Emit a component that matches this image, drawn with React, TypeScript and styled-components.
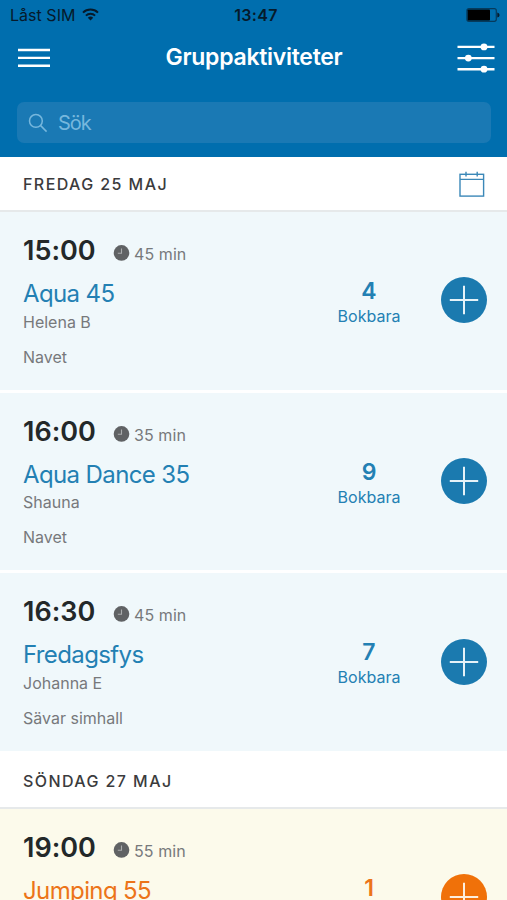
import React from 'react';
import styled, { createGlobalStyle } from 'styled-components';

const GlobalStyle = createGlobalStyle`
  * { box-sizing: border-box; }
  body {
    margin: 0;
    background: #fff;
    font-family: Inter, "Liberation Sans", sans-serif;
    font-feature-settings: "calt" 0;
  }
  h1, h2, h3, p { margin: 0; }
  button { border: 0; padding: 0; background: none; display: flex; }
  svg { display: block; }
`;

const Screen = styled.div`
  width: 507px;
  height: 900px;
  overflow: hidden;
  background: #fff;
`;

const Header = styled.header`
  height: 157px;
  background: #006eae;
`;

const StatusBar = styled.div`
  height: 30px;
  display: grid;
  grid-template-columns: 1fr auto 1fr;
  align-items: center;
  padding: 0 7px 1px 10px;
  color: #061a2b;
`;

const Carrier = styled.div`
  display: flex;
  align-items: center;
  gap: 7px;
  font-size: 16px;
  line-height: 20px;
  letter-spacing: 0.03px;
`;

const Clock = styled.div`
  font-size: 16px;
  line-height: 20px;
  font-weight: 600;
  letter-spacing: 0.35px;
  padding-left: 2px;
`;

const BatterySlot = styled.div`
  display: flex;
  justify-content: flex-end;
`;

const NavBar = styled.div`
  height: 54px;
  display: grid;
  grid-template-columns: 1fr auto 1fr;
  align-items: center;
  padding: 1px 12px 0 18px;
`;

const NavTitle = styled.h1`
  color: #fff;
  font-size: 23px;
  line-height: 28px;
  font-weight: 600;
  letter-spacing: -0.28px;
  padding: 0 5px 1px 0;
`;

const FilterButton = styled.button`
  justify-self: end;
`;

const SearchField = styled.div`
  margin: 18px 16px 0 17px;
  height: 41px;
  border-radius: 7px;
  background: #1a79b4;
  color: #76b7dd;
  display: flex;
  align-items: center;
  gap: 10px;
  padding-left: 11px;
  font-size: 20px;
  line-height: 24px;
  letter-spacing: -1px;
`;

const DayHeader = styled.div<{ $height: number; $top?: number }>`
  height: ${p => p.$height}px;
  display: flex;
  align-items: center;
  justify-content: space-between;
  padding: ${p => p.$top ?? 0}px 22px 0 23px;
  border-bottom: 2px solid #e6e9ea;
`;

const DayTitle = styled.h2`
  color: #3b3b3d;
  font-size: 16px;
  line-height: 20px;
  font-weight: 500;
  letter-spacing: 1.42px;
`;

const Card = styled.article<{ $tone: Tone }>`
  height: 177.5px;
  display: grid;
  grid-template-columns: 1fr 92px 92px;
  padding: 23px 0 0 23px;
  background: ${p => (p.$tone === 'blue' ? '#f0f8fb' : '#fcfaeb')};
  color: ${p => (p.$tone === 'blue' ? '#2380b3' : '#ec7419')};
  & + & { margin-top: 3.2px; }
`;

const TimeLine = styled.div`
  display: flex;
  height: 32px;
`;

const StartTime = styled.div`
  width: 90px;
  color: #232829;
  font-size: 27px;
  line-height: 32px;
  font-weight: 560;
`;

const Duration = styled.div`
  display: flex;
  gap: 4px;
  padding-top: 9px;
  color: #77797b;
  font-size: 16px;
  line-height: 20px;
  letter-spacing: 0.08px;
`;

const Name = styled.h3`
  margin-top: 12px;
  font-size: 24px;
  line-height: 30px;
  font-weight: 400;
  letter-spacing: -0.62px;
`;

const Detail = styled.p<{ $gap: number }>`
  margin-top: ${p => p.$gap}px;
  color: #77797b;
  font-size: 16px;
  line-height: 20px;
`;

const Availability = styled.div`
  padding-top: 42px;
  text-align: center;
`;

const Count = styled.div`
  font-size: 23px;
  line-height: 28px;
  font-weight: 600;
`;

const CountLabel = styled.div`
  margin-top: 1px;
  font-size: 16px;
  line-height: 20px;
`;

const AddButton = styled.button<{ $tone: Tone }>`
  width: 46px;
  height: 46px;
  margin: 42.3px 0 0 25.8px;
  border-radius: 50%;
  align-items: center;
  justify-content: center;
  background: ${p => (p.$tone === 'blue' ? '#1b7aaf' : '#f07109')};
`;

type Tone = 'blue' | 'orange';

interface Activity {
  time: string;
  minutes: number;
  name: string;
  leader: string;
  place: string;
  spots: number;
}

const friday: Activity[] = [
  { time: '15:00', minutes: 45, name: 'Aqua 45', leader: 'Helena B', place: 'Navet', spots: 4 },
  { time: '16:00', minutes: 35, name: 'Aqua Dance 35', leader: 'Shauna', place: 'Navet', spots: 9 },
  { time: '16:30', minutes: 45, name: 'Fredagsfys', leader: 'Johanna E', place: 'Sävar simhall', spots: 7 },
];

const sunday: Activity[] = [
  { time: '19:00', minutes: 55, name: 'Jumping 55', leader: '', place: '', spots: 1 },
];

const WifiIcon = () => (
  <svg width="17" height="13" viewBox="0 0 17 13" fill="none" stroke="#061a2b" strokeWidth="2">
    <path d="M1 4.6C5.2.6 11.8.6 16 4.6" />
    <path d="M3.9 7.6C6.5 5.1 10.5 5.1 13.1 7.6" />
    <path d="M8.5 12.6L5.8 9.7Q8.5 7.3 11.2 9.7Z" fill="#061a2b" stroke="none" />
  </svg>
);

const BatteryIcon = () => (
  <svg width="34" height="14" viewBox="0 0 34 14">
    <rect x=".9" y=".7" width="29.4" height="12.6" rx="2" fill="none" stroke="#063a5c" strokeWidth="1.2" />
    <rect x="1.6" y="1.4" width="22.4" height="11.2" rx=".8" fill="#000" />
    <path d="M31.3 4.4Q33.6 5 33.6 7Q33.6 9 31.3 9.6Z" fill="#061a2b" />
  </svg>
);

const MenuIcon = () => (
  <svg width="32" height="20" viewBox="0 0 32 20" stroke="#fff" strokeWidth="2.4">
    <path d="M0 2H32M0 9.9H32M0 17.7H32" />
  </svg>
);

const FilterIcon = () => (
  <svg width="38" height="30" viewBox="0 0 38 30" stroke="#fff" strokeWidth="2.4" fill="#fff">
    <path d="M.5 3.9H37.5M.5 15.1H37.5M.5 26.2H37.5" />
    <g stroke="none">
      <circle cx="27" cy="3.9" r="3.4" />
      <circle cx="11.3" cy="15.1" r="3.4" />
      <circle cx="27" cy="26.2" r="3.4" />
    </g>
  </svg>
);

const SearchIcon = () => (
  <svg width="20" height="20" viewBox="0 0 20 20" fill="none" stroke="#76b7dd" strokeWidth="1.5">
    <circle cx="7.9" cy="7.9" r="6.4" />
    <path d="M12.4 12.4L18.6 18.6" />
  </svg>
);

const CalendarIcon = () => (
  <svg width="26" height="26" viewBox="0 0 26 26" fill="none" stroke="#3b88b8" strokeWidth="1.4">
    <rect x="1" y="3.3" width="23.6" height="21.8" />
    <path d="M1 8.4H24.6M7 .8V5.4M18.2 .8V5.4" />
  </svg>
);

const ClockIcon = () => (
  <svg width="17" height="17" viewBox="0 0 17 17">
    <circle cx="8.5" cy="8.9" r="7.8" fill="#606264" />
    <path d="M8.5 4.4V9.2H4.8" fill="none" stroke="#aaacad" strokeWidth="1.1" />
  </svg>
);

const PlusIcon = ({ tone }: { tone: Tone }) => (
  <svg
    width="30"
    height="30"
    viewBox="0 0 30 30"
    stroke={tone === 'blue' ? '#e5f2f8' : '#fdeedd'}
    strokeWidth="2"
  >
    <path d="M15 .8V29.2M.8 15H29.2" />
  </svg>
);

function ActivityCard({ activity, tone }: { activity: Activity; tone: Tone }) {
  return (
    <Card $tone={tone}>
      <div>
        <TimeLine>
          <StartTime>{activity.time}</StartTime>
          <Duration>
            <ClockIcon />
            {activity.minutes} min
          </Duration>
        </TimeLine>
        <Name>{activity.name}</Name>
        {activity.leader && <Detail $gap={2.7}>{activity.leader}</Detail>}
        {activity.place && <Detail $gap={15}>{activity.place}</Detail>}
      </div>
      <Availability>
        <Count>{activity.spots}</Count>
        <CountLabel>Bokbara</CountLabel>
      </Availability>
      <AddButton $tone={tone} aria-label="Boka">
        <PlusIcon tone={tone} />
      </AddButton>
    </Card>
  );
}

export default function App() {
  return (
    <Screen>
      <GlobalStyle />
      <Header>
        <StatusBar>
          <Carrier>
            Låst SIM
            <WifiIcon />
          </Carrier>
          <Clock>13:47</Clock>
          <BatterySlot>
            <BatteryIcon />
          </BatterySlot>
        </StatusBar>
        <NavBar>
          <button aria-label="Meny">
            <MenuIcon />
          </button>
          <NavTitle>Gruppaktiviteter</NavTitle>
          <FilterButton aria-label="Filter">
            <FilterIcon />
          </FilterButton>
        </NavBar>
        <SearchField>
          <SearchIcon />
          Sök
        </SearchField>
      </Header>
      <DayHeader $height={55}>
        <DayTitle>FREDAG 25 MAJ</DayTitle>
        <CalendarIcon />
      </DayHeader>
      <section>
        {friday.map(a => (
          <ActivityCard key={a.time} activity={a} tone="blue" />
        ))}
      </section>
      <DayHeader $height={58} $top={4}>
        <DayTitle>SÖNDAG 27 MAJ</DayTitle>
      </DayHeader>
      <section>
        {sunday.map(a => (
          <ActivityCard key={a.time} activity={a} tone="orange" />
        ))}
      </section>
    </Screen>
  );
}
